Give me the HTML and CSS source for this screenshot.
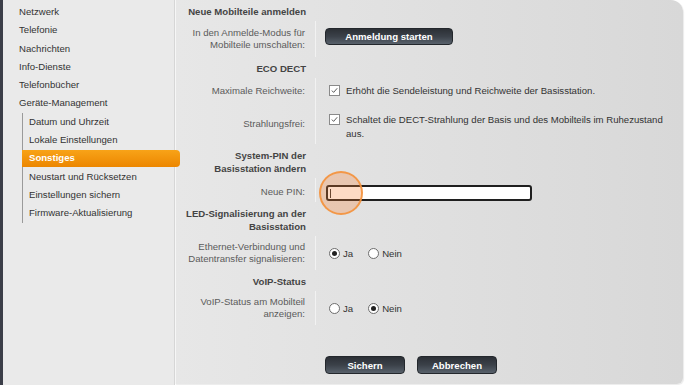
FILE: index.html
```html
<!DOCTYPE html>
<html lang="de">
<head>
    <meta charset="UTF-8">
    <meta name="viewport" content="width=device-width, initial-scale=1.0">
    <title>Sonstiges</title>
    <link rel="stylesheet" href="styles.css">
</head>
<body>
    <div class="frame">
        <div class="strip"></div>
        <nav class="sidebar">
            <ul class="menu">
                <li>Netzwerk</li>
                <li>Telefonie</li>
                <li>Nachrichten</li>
                <li>Info-Dienste</li>
                <li>Telefonbücher</li>
                <li>Geräte-Management
                    <ul class="submenu">
                        <li>Datum und Uhrzeit</li>
                        <li>Lokale Einstellungen</li>
                        <li class="active">Sonstiges</li>
                        <li>Neustart und Rücksetzen</li>
                        <li>Einstellungen sichern</li>
                        <li>Firmware-Aktualisierung</li>
                    </ul>
                </li>
            </ul>
        </nav>
        <main class="content">
            <div class="head">Neue Mobilteile anmelden</div>
            <div class="row">
                <div class="label">In den Anmelde-Modus für<br>Mobilteile umschalten:</div>
                <div class="field"><button class="btn wide">Anmeldung starten</button></div>
            </div>

            <div class="head">ECO DECT</div>
            <div class="row check-row">
                <div class="label">Maximale Reichweite:</div>
                <div class="field">
                    <span class="check"><svg viewBox="0 0 11 11"><path d="M2.3 5.6 L4.4 7.8 L8.8 2.8" fill="none" stroke="#555" stroke-width="1.2"/></svg></span>
                    <span class="text">Erhöht die Sendeleistung und Reichweite der Basisstation.</span>
                </div>
            </div>
            <div class="row check-row">
                <div class="label">Strahlungsfrei:</div>
                <div class="field">
                    <span class="check"><svg viewBox="0 0 11 11"><path d="M2.3 5.6 L4.4 7.8 L8.8 2.8" fill="none" stroke="#555" stroke-width="1.2"/></svg></span>
                    <span class="text">Schaltet die DECT-Strahlung der Basis und des Mobilteils im Ruhezustand<br>aus.</span>
                </div>
            </div>

            <div class="head">System-PIN der<br>Basisstation ändern</div>
            <div class="row pin-row">
                <div class="label">Neue PIN:</div>
                <div class="field">
                    <div class="pin-input"><span class="caret"></span></div>
                    <span class="touch"></span>
                </div>
            </div>

            <div class="head">LED-Signalisierung an der<br>Basisstation</div>
            <div class="row radio-row">
                <div class="label">Ethernet-Verbindung und<br>Datentransfer signalisieren:</div>
                <div class="field">
                    <span class="radio on"></span><span class="opt">Ja</span>
                    <span class="radio"></span><span class="opt">Nein</span>
                </div>
            </div>

            <div class="head">VoIP-Status</div>
            <div class="row radio-row">
                <div class="label">VoIP-Status am Mobilteil<br>anzeigen:</div>
                <div class="field">
                    <span class="radio"></span><span class="opt">Ja</span>
                    <span class="radio on"></span><span class="opt">Nein</span>
                </div>
            </div>

            <div class="actions">
                <button class="btn">Sichern</button>
                <button class="btn">Abbrechen</button>
            </div>
        </main>
    </div>
</body>
</html>
```

FILE: styles.css
```css
html, body {
    margin: 0;
    padding: 0;
    height: 100%;
    background: #fff;
}
body {
    font-family: "Liberation Sans", Arial, sans-serif;
    font-size: 9.6px;
    color: #333;
}
.frame {
    display: flex;
    height: 100%;
}
.strip {
    width: 3px;
    background: #3b3e48;
}
.sidebar {
    width: 172px;
    background: #eaeaea;
    border-right: 1px solid #d6d6d6;
    padding-top: 3px;
    box-sizing: border-box;
}
.menu, .submenu {
    list-style: none;
    margin: 0;
    padding: 0;
}
.menu li {
    padding-left: 16px;
    line-height: 18.3px;
    color: #333;
}
.submenu {
    margin-left: 3px;
    border-left: 1px solid #9a9a9a;
}
.submenu li {
    padding-left: 6px;
}
.submenu li.active {
    position: relative;
    z-index: 1;
    margin: 1px -6px 1px -1px;
    padding-left: 7px;
    line-height: 16.3px;
    background: linear-gradient(#f8a318, #ec8600);
    border-radius: 0 4px 4px 0;
    color: #fff;
    font-weight: bold;
}
.content {
    flex: 1;
    margin: 0 2px 1px 0;
    background: linear-gradient(to right, #e7e7e7, #d8d8d8);
    border-left: 1px solid #f6f6f6;
    border-radius: 0 12px 6px 0;
    box-shadow: 1px 1px 1px rgba(0, 0, 0, 0.08);
}
.head {
    width: 140px;
    box-sizing: border-box;
    padding: 5px 10px 3px 0;
    text-align: right;
    font-weight: bold;
    line-height: 13px;
    color: #444;
}
.row {
    display: flex;
}
.label {
    width: 140px;
    box-sizing: border-box;
    padding: 6px 10px 6px 0;
    text-align: right;
    line-height: 12px;
    color: #5b5b5b;
    border-right: 1px solid rgba(255, 255, 255, 0.55);
    display: flex;
    align-items: center;
    justify-content: flex-end;
}
.field {
    flex: 1;
    padding-left: 9px;
    display: flex;
    align-items: center;
    position: relative;
}
.check-row .field {
    align-items: flex-start;
    padding-top: 6px;
    padding-bottom: 6px;
}
.check-row + .check-row .field {
    padding-top: 9px;
    padding-bottom: 3px;
}
.check {
    width: 11px;
    height: 11px;
    margin: 1px 6px 0 4px;
    box-sizing: border-box;
    border: 1px solid #8a8a8a;
    background: #fff;
    flex-shrink: 0;
}
.check svg {
    display: block;
    width: 9px;
    height: 9px;
}
.text {
    line-height: 14px;
    color: #333;
}
.pin-row .label {
    padding-top: 8px;
    padding-bottom: 4px;
}
.pin-row .field {
    align-items: flex-start;
    padding-top: 7px;
}
.pin-input {
    width: 206px;
    height: 16px;
    box-sizing: border-box;
    margin-left: 1px;
    border: 2px solid #1f1f1f;
    border-radius: 3px;
    background: #fff;
    display: flex;
    align-items: center;
}
.caret {
    width: 1px;
    height: 9px;
    margin-left: 2px;
    background: #333;
}
.touch {
    position: absolute;
    left: 3px;
    top: 15px;
    width: 40px;
    height: 40px;
    margin-top: -22px;
    border-radius: 50%;
    border: 2px solid rgba(244, 146, 60, 0.9);
    background: rgba(248, 125, 45, 0.28);
}
.radio-row .label {
    padding-top: 5px;
    padding-bottom: 5px;
}
.radio {
    width: 11px;
    height: 11px;
    box-sizing: border-box;
    margin-left: 4px;
    border: 1px solid #6d6d6d;
    border-radius: 50%;
    background: #fff;
    display: flex;
    align-items: center;
    justify-content: center;
}
.radio.on::after {
    content: "";
    width: 5px;
    height: 5px;
    border-radius: 50%;
    background: #222;
}
.opt {
    margin-left: 3px;
    margin-right: 11px;
    color: #333;
}
.actions {
    display: flex;
    gap: 12px;
    padding-left: 149px;
    margin-top: 31px;
}
.btn {
    width: 80px;
    height: 18px;
    padding: 0;
    border: 1px solid #23272c;
    border-radius: 4px;
    background: linear-gradient(#2c3036, #3b4149 50%, #58616b);
    color: #fff;
    font-family: "Liberation Sans", Arial, sans-serif;
    font-size: 9.6px;
    font-weight: bold;
}
.btn.wide {
    width: 128px;
    height: 17px;
    margin-bottom: 5px;
}
```
